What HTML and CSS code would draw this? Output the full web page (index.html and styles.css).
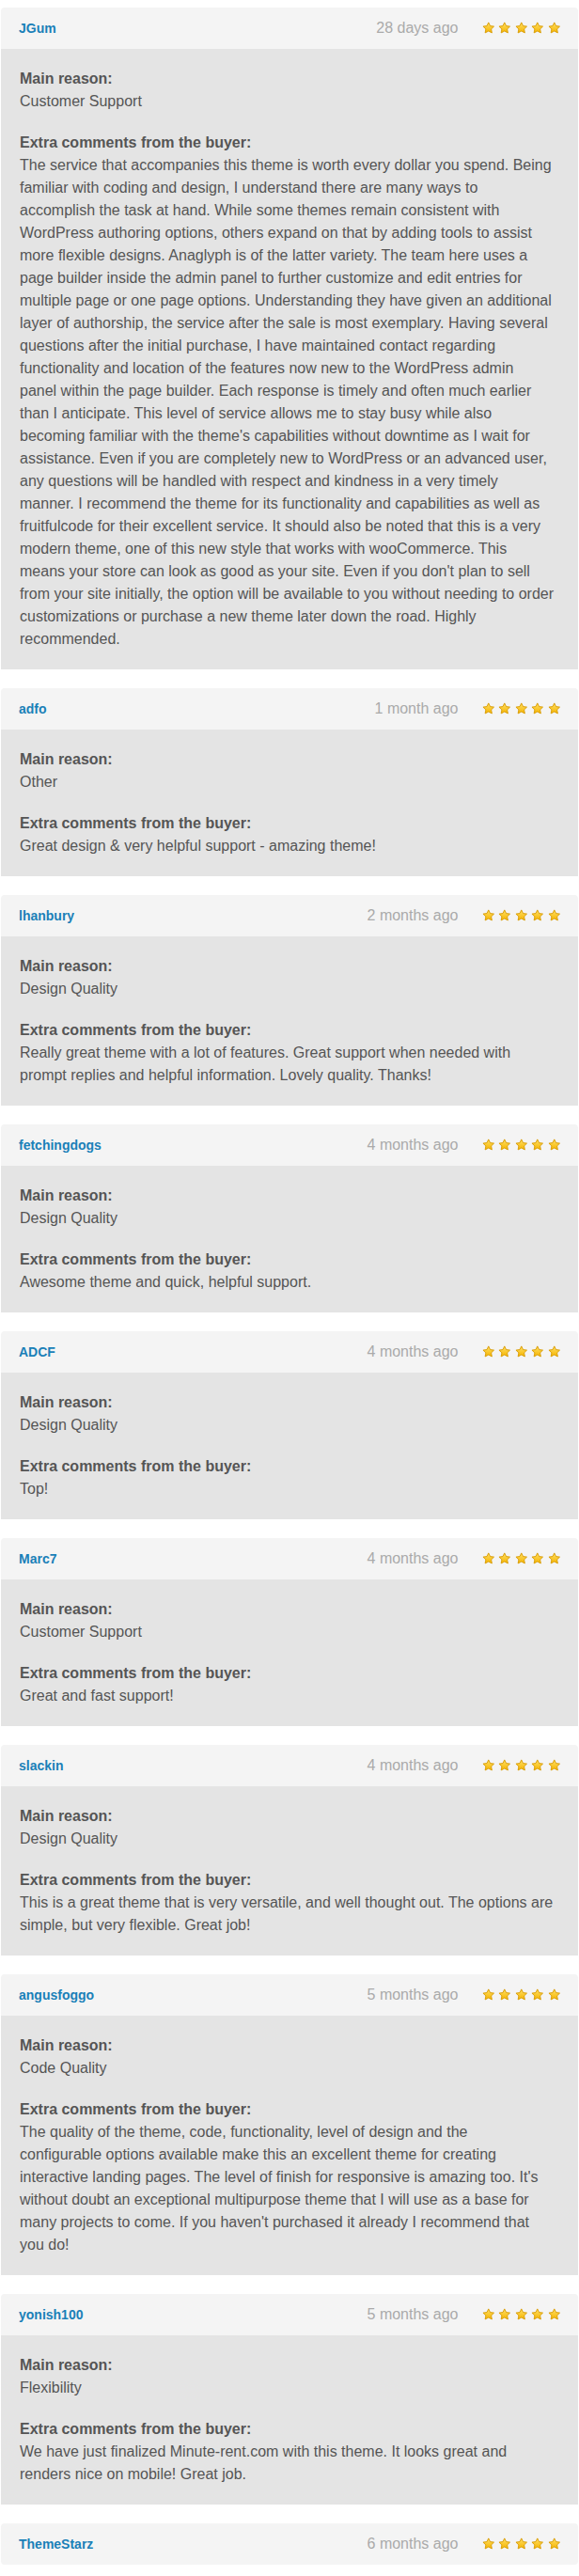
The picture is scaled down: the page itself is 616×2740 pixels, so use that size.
FILE: index.html
```html
<!DOCTYPE html>
<html>
<head>
    <title>Reviews</title>
    <link rel="stylesheet" href="styles.css">
</head>
<body>
    <svg class="defs" width="0" height="0">
        <defs>
            <linearGradient id="starFill" x1="0" y1="0" x2="0" y2="1">
                <stop offset="0" stop-color="#ffe066"/>
                <stop offset="1" stop-color="#f5b400"/>
            </linearGradient>
            <symbol id="star" viewBox="0 0 24 24">
                <path d="M12 1.6l3.2 6.5 7.1 1-5.2 5 1.3 7.1L12 17.8l-6.4 3.4 1.3-7.1-5.2-5 7.1-1z" fill="url(#starFill)" stroke="#d79a00" stroke-width="1.6" stroke-linejoin="round"/>
            </symbol>
        </defs>
    </svg>

    <div class="reviews">

        <div class="review">
            <div class="review-head">
                <a class="author" href="#">JGum</a>
                <span class="date">28 days ago</span>
                <span class="stars">
                    <svg><use href="#star"/></svg><svg><use href="#star"/></svg><svg><use href="#star"/></svg><svg><use href="#star"/></svg><svg><use href="#star"/></svg>
                </span>
            </div>
            <div class="review-body">
                <div class="field">
                    <strong>Main reason:</strong>
                    <p>Customer Support</p>
                </div>
                <div class="field">
                    <strong>Extra comments from the buyer:</strong>
                    <p>The service that accompanies this theme is worth every dollar you spend. Being familiar with coding and design, I understand there are many ways to accomplish the task at hand. While some themes remain consistent with WordPress authoring options, others expand on that by adding tools to assist more flexible designs. Anaglyph is of the latter variety. The team here uses a page builder inside the admin panel to further customize and edit entries for multiple page or one page options. Understanding they have given an additional layer of authorship, the service after the sale is most exemplary. Having several questions after the initial purchase, I have maintained contact regarding functionality and location of the features now new to the WordPress admin panel within the page builder. Each response is timely and often much earlier than I anticipate. This level of service allows me to stay busy while also becoming familiar with the theme's capabilities without downtime as I wait for assistance. Even if you are completely new to WordPress or an advanced user, any questions will be handled with respect and kindness in a very timely manner. I recommend the theme for its functionality and capabilities as well as fruitfulcode for their excellent service. It should also be noted that this is a very modern theme, one of this new style that works with wooCommerce. This means your store can look as good as your site. Even if you don't plan to sell from your site initially, the option will be available to you without needing to order customizations or purchase a new theme later down the road. Highly recommended.</p>
                </div>
            </div>
        </div>

        <div class="review">
            <div class="review-head">
                <a class="author" href="#">adfo</a>
                <span class="date">1 month ago</span>
                <span class="stars">
                    <svg><use href="#star"/></svg><svg><use href="#star"/></svg><svg><use href="#star"/></svg><svg><use href="#star"/></svg><svg><use href="#star"/></svg>
                </span>
            </div>
            <div class="review-body">
                <div class="field">
                    <strong>Main reason:</strong>
                    <p>Other</p>
                </div>
                <div class="field">
                    <strong>Extra comments from the buyer:</strong>
                    <p>Great design &amp; very helpful support - amazing theme!</p>
                </div>
            </div>
        </div>

        <div class="review">
            <div class="review-head">
                <a class="author" href="#">lhanbury</a>
                <span class="date">2 months ago</span>
                <span class="stars">
                    <svg><use href="#star"/></svg><svg><use href="#star"/></svg><svg><use href="#star"/></svg><svg><use href="#star"/></svg><svg><use href="#star"/></svg>
                </span>
            </div>
            <div class="review-body">
                <div class="field">
                    <strong>Main reason:</strong>
                    <p>Design Quality</p>
                </div>
                <div class="field">
                    <strong>Extra comments from the buyer:</strong>
                    <p>Really great theme with a lot of features. Great support when needed with prompt replies and helpful information. Lovely quality. Thanks!</p>
                </div>
            </div>
        </div>

        <div class="review">
            <div class="review-head">
                <a class="author" href="#">fetchingdogs</a>
                <span class="date">4 months ago</span>
                <span class="stars">
                    <svg><use href="#star"/></svg><svg><use href="#star"/></svg><svg><use href="#star"/></svg><svg><use href="#star"/></svg><svg><use href="#star"/></svg>
                </span>
            </div>
            <div class="review-body">
                <div class="field">
                    <strong>Main reason:</strong>
                    <p>Design Quality</p>
                </div>
                <div class="field">
                    <strong>Extra comments from the buyer:</strong>
                    <p>Awesome theme and quick, helpful support.</p>
                </div>
            </div>
        </div>

        <div class="review">
            <div class="review-head">
                <a class="author" href="#">ADCF</a>
                <span class="date">4 months ago</span>
                <span class="stars">
                    <svg><use href="#star"/></svg><svg><use href="#star"/></svg><svg><use href="#star"/></svg><svg><use href="#star"/></svg><svg><use href="#star"/></svg>
                </span>
            </div>
            <div class="review-body">
                <div class="field">
                    <strong>Main reason:</strong>
                    <p>Design Quality</p>
                </div>
                <div class="field">
                    <strong>Extra comments from the buyer:</strong>
                    <p>Top!</p>
                </div>
            </div>
        </div>

        <div class="review">
            <div class="review-head">
                <a class="author" href="#">Marc7</a>
                <span class="date">4 months ago</span>
                <span class="stars">
                    <svg><use href="#star"/></svg><svg><use href="#star"/></svg><svg><use href="#star"/></svg><svg><use href="#star"/></svg><svg><use href="#star"/></svg>
                </span>
            </div>
            <div class="review-body">
                <div class="field">
                    <strong>Main reason:</strong>
                    <p>Customer Support</p>
                </div>
                <div class="field">
                    <strong>Extra comments from the buyer:</strong>
                    <p>Great and fast support!</p>
                </div>
            </div>
        </div>

        <div class="review">
            <div class="review-head">
                <a class="author" href="#">slackin</a>
                <span class="date">4 months ago</span>
                <span class="stars">
                    <svg><use href="#star"/></svg><svg><use href="#star"/></svg><svg><use href="#star"/></svg><svg><use href="#star"/></svg><svg><use href="#star"/></svg>
                </span>
            </div>
            <div class="review-body">
                <div class="field">
                    <strong>Main reason:</strong>
                    <p>Design Quality</p>
                </div>
                <div class="field">
                    <strong>Extra comments from the buyer:</strong>
                    <p>This is a great theme that is very versatile, and well thought out. The options are simple, but very flexible. Great job!</p>
                </div>
            </div>
        </div>

        <div class="review">
            <div class="review-head">
                <a class="author" href="#">angusfoggo</a>
                <span class="date">5 months ago</span>
                <span class="stars">
                    <svg><use href="#star"/></svg><svg><use href="#star"/></svg><svg><use href="#star"/></svg><svg><use href="#star"/></svg><svg><use href="#star"/></svg>
                </span>
            </div>
            <div class="review-body">
                <div class="field">
                    <strong>Main reason:</strong>
                    <p>Code Quality</p>
                </div>
                <div class="field">
                    <strong>Extra comments from the buyer:</strong>
                    <p>The quality of the theme, code, functionality, level of design and the configurable options available make this an excellent theme for creating interactive landing pages. The level of finish for responsive is amazing too. It's without doubt an exceptional multipurpose theme that I will use as a base for many projects to come. If you haven't purchased it already I recommend that you do!</p>
                </div>
            </div>
        </div>

        <div class="review">
            <div class="review-head">
                <a class="author" href="#">yonish100</a>
                <span class="date">5 months ago</span>
                <span class="stars">
                    <svg><use href="#star"/></svg><svg><use href="#star"/></svg><svg><use href="#star"/></svg><svg><use href="#star"/></svg><svg><use href="#star"/></svg>
                </span>
            </div>
            <div class="review-body">
                <div class="field">
                    <strong>Main reason:</strong>
                    <p>Flexibility</p>
                </div>
                <div class="field">
                    <strong>Extra comments from the buyer:</strong>
                    <p>We have just finalized Minute-rent.com with this theme. It looks great and renders nice on mobile! Great job.</p>
                </div>
            </div>
        </div>

        <div class="review">
            <div class="review-head">
                <a class="author" href="#">ThemeStarz</a>
                <span class="date">6 months ago</span>
                <span class="stars">
                    <svg><use href="#star"/></svg><svg><use href="#star"/></svg><svg><use href="#star"/></svg><svg><use href="#star"/></svg><svg><use href="#star"/></svg>
                </span>
            </div>
        </div>

    </div>
</body>
</html>
```

FILE: styles.css
```css
body {
    margin: 0;
    padding-top: 8px;
    background-color: white;
    font-family: "Liberation Sans", Arial, sans-serif;
    font-size: 16px;
    line-height: 24px;
    color: #555;
}
.defs {
    position: absolute;
    width: 0;
    height: 0;
}
.reviews {
    margin: 0 1px;
}
.review {
    margin-bottom: 20px;
}
.review-head {
    display: flex;
    align-items: center;
    height: 44px;
    padding: 0 19px 0 19px;
    background-color: #f4f4f4;
    border-radius: 4px 4px 0 0;
}
.review-head:last-child {
    border-radius: 4px;
}
.author {
    font-size: 14px;
    font-weight: bold;
    color: #1a80b8;
    text-decoration: none;
}
.date {
    margin-left: auto;
    color: #aaa;
    font-size: 16px;
}
.stars {
    display: flex;
    gap: 4px;
    margin-left: 25px;
}
.stars svg {
    width: 13.5px;
    height: 13.5px;
}
.review-body {
    padding: 20px 26px 20px 20px;
    background-color: #e4e4e4;
}
.field {
    margin-bottom: 20px;
}
.field:last-child {
    margin-bottom: 0;
}
.field strong {
    display: block;
}
.field p {
    margin: 0;
}
```
